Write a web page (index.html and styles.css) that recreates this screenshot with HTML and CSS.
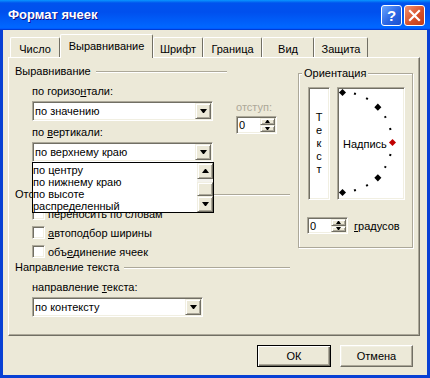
FILE: index.html
```html
<!DOCTYPE html>
<html lang="ru">
<head>
    <meta charset="UTF-8">
    <title>Формат ячеек</title>
    <link rel="stylesheet" href="styles.css">
</head>
<body>
    <div class="window">
        <div class="titlebar">
            <span class="title">Формат ячеек</span>
            <div class="title-buttons">
                <span class="tb-btn help">?</span>
                <span class="tb-btn close">
                    <svg width="13" height="13" viewBox="0 0 13 13"><path d="M2 2 L11 11 M11 2 L2 11" stroke="#fff" stroke-width="2.2" stroke-linecap="square"/></svg>
                </span>
            </div>
        </div>

        <div class="client">
            <div class="tabs">
                <div class="tab tab-number">Число</div>
                <div class="tab tab-align active">Выравнивание</div>
                <div class="tab tab-font">Шрифт</div>
                <div class="tab tab-border">Граница</div>
                <div class="tab tab-view">Вид</div>
                <div class="tab tab-protect">Защита</div>
            </div>

            <div class="panel">
                <div class="left">
                    <div class="group-head short">Выравнивание</div>
                    <div class="field-row">
                        <div class="field">
                            <div class="lbl">по горизо<u>н</u>тали:</div>
                            <div class="combo">
                                <span class="combo-text">по значению</span>
                                <span class="combo-btn"><i class="tri-down"></i></span>
                            </div>
                            <div class="lbl tight">по <u>в</u>ертикали:</div>
                            <div class="combo-wrap">
                                <div class="combo">
                                    <span class="combo-text">по верхнему краю</span>
                                    <span class="combo-btn"><i class="tri-down"></i></span>
                                </div>
                                <div class="dropdown">
                                    <div class="dd-items">
                                        <div class="dd-item">по центру</div>
                                        <div class="dd-item">по нижнему краю</div>
                                        <div class="dd-item">по высоте</div>
                                        <div class="dd-item">распределенный</div>
                                    </div>
                                    <div class="dd-scroll">
                                        <span class="sb-btn"><i class="tri-up"></i></span>
                                        <span class="sb-track"><span class="sb-thumb"></span></span>
                                        <span class="sb-btn"><i class="tri-down"></i></span>
                                    </div>
                                </div>
                            </div>
                        </div>
                        <div class="indent">
                            <div class="lbl disabled">отступ:</div>
                            <div class="spin">
                                <span class="spin-val">0</span>
                                <span class="spin-btns">
                                    <span class="spin-btn"><i class="tri-up small"></i></span>
                                    <span class="spin-btn"><i class="tri-down small"></i></span>
                                </span>
                            </div>
                        </div>
                    </div>

                    <div class="group-head display">Отображение</div>
                    <div class="check first"><span class="box"></span>переносить по словам</div>
                    <div class="check"><span class="box"></span><u>а</u>втоподбор ширины</div>
                    <div class="check"><span class="box"></span>объ<u>е</u>динение ячеек</div>

                    <div class="group-head flush">Направление текста</div>
                    <div class="field">
                        <div class="lbl">направление <u>т</u>екста:</div>
                        <div class="combo narrow">
                            <span class="combo-text">по контексту</span>
                            <span class="combo-btn"><i class="tri-down"></i></span>
                        </div>
                    </div>
                </div>

                <div class="orient">
                    <div class="orient-title">Ориентация</div>
                    <div class="orient-boxes">
                        <div class="vtext">
                            <span>Т</span><span>е</span><span>к</span><span>с</span><span>т</span>
                        </div>
                        <div class="dial">
                            <span class="mark big" style="--a:-90deg"></span>
                            <span class="mark" style="--a:-75deg"></span>
                            <span class="mark" style="--a:-60deg"></span>
                            <span class="mark big" style="--a:-45deg"></span>
                            <span class="mark" style="--a:-30deg"></span>
                            <span class="mark" style="--a:-15deg"></span>
                            <span class="mark big red" style="--a:0deg"></span>
                            <span class="mark" style="--a:15deg"></span>
                            <span class="mark" style="--a:30deg"></span>
                            <span class="mark big" style="--a:45deg"></span>
                            <span class="mark" style="--a:60deg"></span>
                            <span class="mark" style="--a:75deg"></span>
                            <span class="mark big" style="--a:90deg"></span>
                            <span class="dial-text">Надпись</span>
                        </div>
                    </div>
                    <div class="degrees">
                        <div class="spin">
                            <span class="spin-val">0</span>
                            <span class="spin-btns">
                                <span class="spin-btn"><i class="tri-up small"></i></span>
                                <span class="spin-btn"><i class="tri-down small"></i></span>
                            </span>
                        </div>
                        <span class="deg-label"><u>г</u>радусов</span>
                    </div>
                </div>
            </div>

            <div class="actions">
                <button class="btn default">ОК</button>
                <button class="btn cancel">Отмена</button>
            </div>
        </div>
    </div>
</body>
</html>
```

FILE: styles.css
```css
body {
    margin: 0;
    font-family: "Liberation Sans", Arial, sans-serif;
    font-size: 11px;
    color: #000;
    background: #fff;
}
.window {
    width: 430px;
    height: 378px;
    background: #0840d4;
    display: flex;
    flex-direction: column;
}
.titlebar {
    height: 30px;
    flex: none;
    display: flex;
    align-items: center;
    justify-content: space-between;
    padding: 0 5px 0 8px;
    background: linear-gradient(180deg, #0997ff, #0053ee 10%, #0050ee 40%, #0066ff 88%, #0066ff 93%, #005bff 95%, #003dd7 97%, #003dd7);
}
.title {
    color: #fff;
    font-weight: bold;
    font-size: 13px;
    text-shadow: 1px 1px #0f1089;
    padding-bottom: 1px;
}
.title-buttons {
    display: flex;
    gap: 2px;
}
.tb-btn {
    width: 21px;
    height: 21px;
    box-sizing: border-box;
    border: 1px solid #fff;
    border-radius: 3px;
    display: flex;
    align-items: center;
    justify-content: center;
}
.help {
    background: linear-gradient(135deg, #6aa6ff, #2a66e4 55%, #1a50d0);
    color: #fff;
    font-weight: bold;
    font-size: 15px;
}
.close {
    background: linear-gradient(135deg, #f09272, #d8512a 55%, #c23b17);
}
.client {
    flex: 1;
    margin: 0 3px 3px;
    background: #ece9d8;
    display: flex;
    flex-direction: column;
}
.tabs {
    display: flex;
    align-items: flex-end;
    height: 23px;
    margin: 4px 0 0 7px;
    position: relative;
    z-index: 1;
}
.tab {
    height: 20px;
    box-sizing: border-box;
    border-top: 1px solid #fff;
    border-left: 1px solid #fff;
    border-right: 1px solid #716f64;
    border-radius: 2px 2px 0 0;
    display: flex;
    align-items: center;
    justify-content: center;
    padding-top: 2px;
    background: #ece9d8;
}
.tab.active {
    height: 24px;
    margin-bottom: -1px;
    padding: 0 0 2px;
}
.tab-number { width: 50px; }
.tab-align { width: 93px; }
.tab-font { width: 50px; }
.tab-border { width: 59px; }
.tab-view { width: 52px; }
.tab-protect { width: 54px; }
.panel {
    margin-left: 5px;
    width: 412px;
    height: 279px;
    box-sizing: border-box;
    border: 1px solid;
    border-color: #fff #716f64 #716f64 #fff;
    box-shadow: inset -1px -1px #aca899;
    display: flex;
}
.left {
    width: 281px;
    padding-left: 6px;
    box-sizing: border-box;
}
.group-head {
    display: flex;
    align-items: center;
    line-height: 13px;
    margin-top: 7px;
}
.group-head::after {
    content: "";
    flex: 1;
    border-top: 1px solid #aca899;
    border-bottom: 1px solid #fff;
    margin-left: 5px;
}
.group-head.short::after {
    margin-right: 63px;
}
.group-head.display {
    margin-top: 26px;
}
.group-head.flush {
    margin-top: 0;
}
.field-row {
    display: flex;
}
.field {
    margin-left: 17px;
    width: 181px;
}
.lbl {
    line-height: 13px;
    margin-top: 7px;
}
.lbl.tight {
    margin-top: 5px;
}
.lbl.disabled {
    color: #aca899;
    margin-top: 23px;
}
.combo, .spin {
    display: flex;
    box-sizing: border-box;
    background: #fff;
    border: 1px solid;
    border-color: #aca899 #fff #fff #aca899;
    box-shadow: inset 1px 1px #716f64, inset -1px -1px #f1efe2;
    padding: 1px;
}
.combo {
    height: 20px;
    margin-top: 3px;
}
.combo.narrow {
    width: 171px;
}
.combo-text, .spin-val {
    flex: 1;
    align-self: center;
    padding-left: 1px;
    white-space: nowrap;
}
.combo-btn, .sb-btn, .sb-thumb, .spin-btn {
    background: #ece9d8;
    box-sizing: border-box;
    border: 1px solid;
    border-color: #f1efe2 #716f64 #716f64 #f1efe2;
    box-shadow: inset 1px 1px #fff, inset -1px -1px #aca899;
    display: flex;
    align-items: center;
    justify-content: center;
}
.combo-btn {
    width: 16px;
}
.tri-down, .tri-up {
    width: 1px;
    height: 0;
    border-left: 3px solid transparent;
    border-right: 3px solid transparent;
}
.tri-down {
    border-top: 4px solid #000;
}
.tri-up {
    border-bottom: 4px solid #000;
}
.tri-down.small {
    border-width: 3px 2px 0;
}
.tri-up.small {
    border-width: 0 2px 3px;
}
.combo-wrap {
    position: relative;
}
.dropdown {
    position: absolute;
    left: 0;
    top: 100%;
    width: 182px;
    height: 51px;
    box-sizing: border-box;
    border: 1px solid #000;
    background: #fff;
    display: flex;
    z-index: 2;
}
.dd-items {
    flex: 1;
    padding-top: 1px;
}
.dd-item {
    line-height: 12px;
    white-space: nowrap;
}
.dd-scroll {
    width: 16px;
    display: flex;
    flex-direction: column;
    background: #f4f3ee;
}
.sb-btn {
    height: 16px;
}
.sb-track {
    flex: 1;
    display: flex;
    align-items: flex-end;
}
.sb-thumb {
    width: 100%;
    height: 14px;
}
.indent {
    margin-left: 23px;
}
.spin {
    width: 41px;
    height: 18px;
    margin-top: 2px;
}
.spin-btns {
    width: 15px;
    display: flex;
    flex-direction: column;
}
.spin-btn {
    flex: 1;
}
.check {
    display: flex;
    align-items: center;
    height: 19px;
    margin-left: 17px;
}
.check.first {
    margin-top: 3px;
}
.box {
    width: 13px;
    height: 13px;
    box-sizing: border-box;
    background: #fff;
    border: 1px solid;
    border-color: #aca899 #fff #fff #aca899;
    box-shadow: inset 1px 1px #716f64, inset -1px -1px #f1efe2;
    margin-right: 3px;
}
.orient {
    margin: 15px 0 0 8px;
    width: 115px;
    height: 175px;
    box-sizing: border-box;
    border: 1px solid #aca899;
    box-shadow: inset 1px 1px #fff, 1px 1px #fff;
    padding-left: 9px;
}
.orient-title {
    margin: -7px 0 0 -6px;
    padding: 0 2px;
    width: max-content;
    line-height: 13px;
    background: #ece9d8;
}
.orient-boxes {
    display: flex;
    gap: 7px;
    margin-top: 7px;
}
.vtext, .dial {
    height: 113px;
    box-sizing: border-box;
    background: #fff;
    border: 1px solid;
    border-color: #aca899 #fff #fff #aca899;
    box-shadow: inset 1px 1px #716f64, inset -1px -1px #f1efe2;
}
.vtext {
    width: 22px;
    display: flex;
    flex-direction: column;
    align-items: center;
    justify-content: center;
    line-height: 13px;
}
.dial {
    width: 68px;
    position: relative;
    display: flex;
    align-items: center;
    padding-left: 5px;
}
.mark {
    position: absolute;
    left: 3px;
    top: 53px;
    width: 2px;
    height: 2px;
    background: #000;
    transform: rotate(var(--a)) translateX(50px);
}
.mark.big {
    left: 1.5px;
    top: 51.5px;
    width: 5px;
    height: 5px;
    transform: rotate(var(--a)) translateX(50px) rotate(calc(45deg - var(--a)));
}
.mark.red {
    background: #c00000;
}
.degrees {
    display: flex;
    align-items: center;
    margin: 17px 0 0 -1px;
}
.degrees .spin {
    margin-top: 0;
    height: 17px;
}
.deg-label {
    margin-left: 6px;
}
.actions {
    display: flex;
    justify-content: flex-end;
    gap: 9px;
    margin-top: 9px;
    padding-right: 14px;
}
.btn {
    height: 22px;
    font-family: inherit;
    font-size: 11px;
    color: #000;
    background: #ece9d8;
    border: 1px solid;
    border-color: #fff #716f64 #716f64 #fff;
    box-shadow: inset -1px -1px #aca899, inset 1px 1px #f1efe2;
    padding: 0;
}
.btn.default {
    width: 74px;
    border-color: #000;
    box-shadow: inset 1px 1px #fff, inset -1px -1px #716f64, inset -2px -2px #aca899;
}
.btn.cancel {
    width: 73px;
}
```
